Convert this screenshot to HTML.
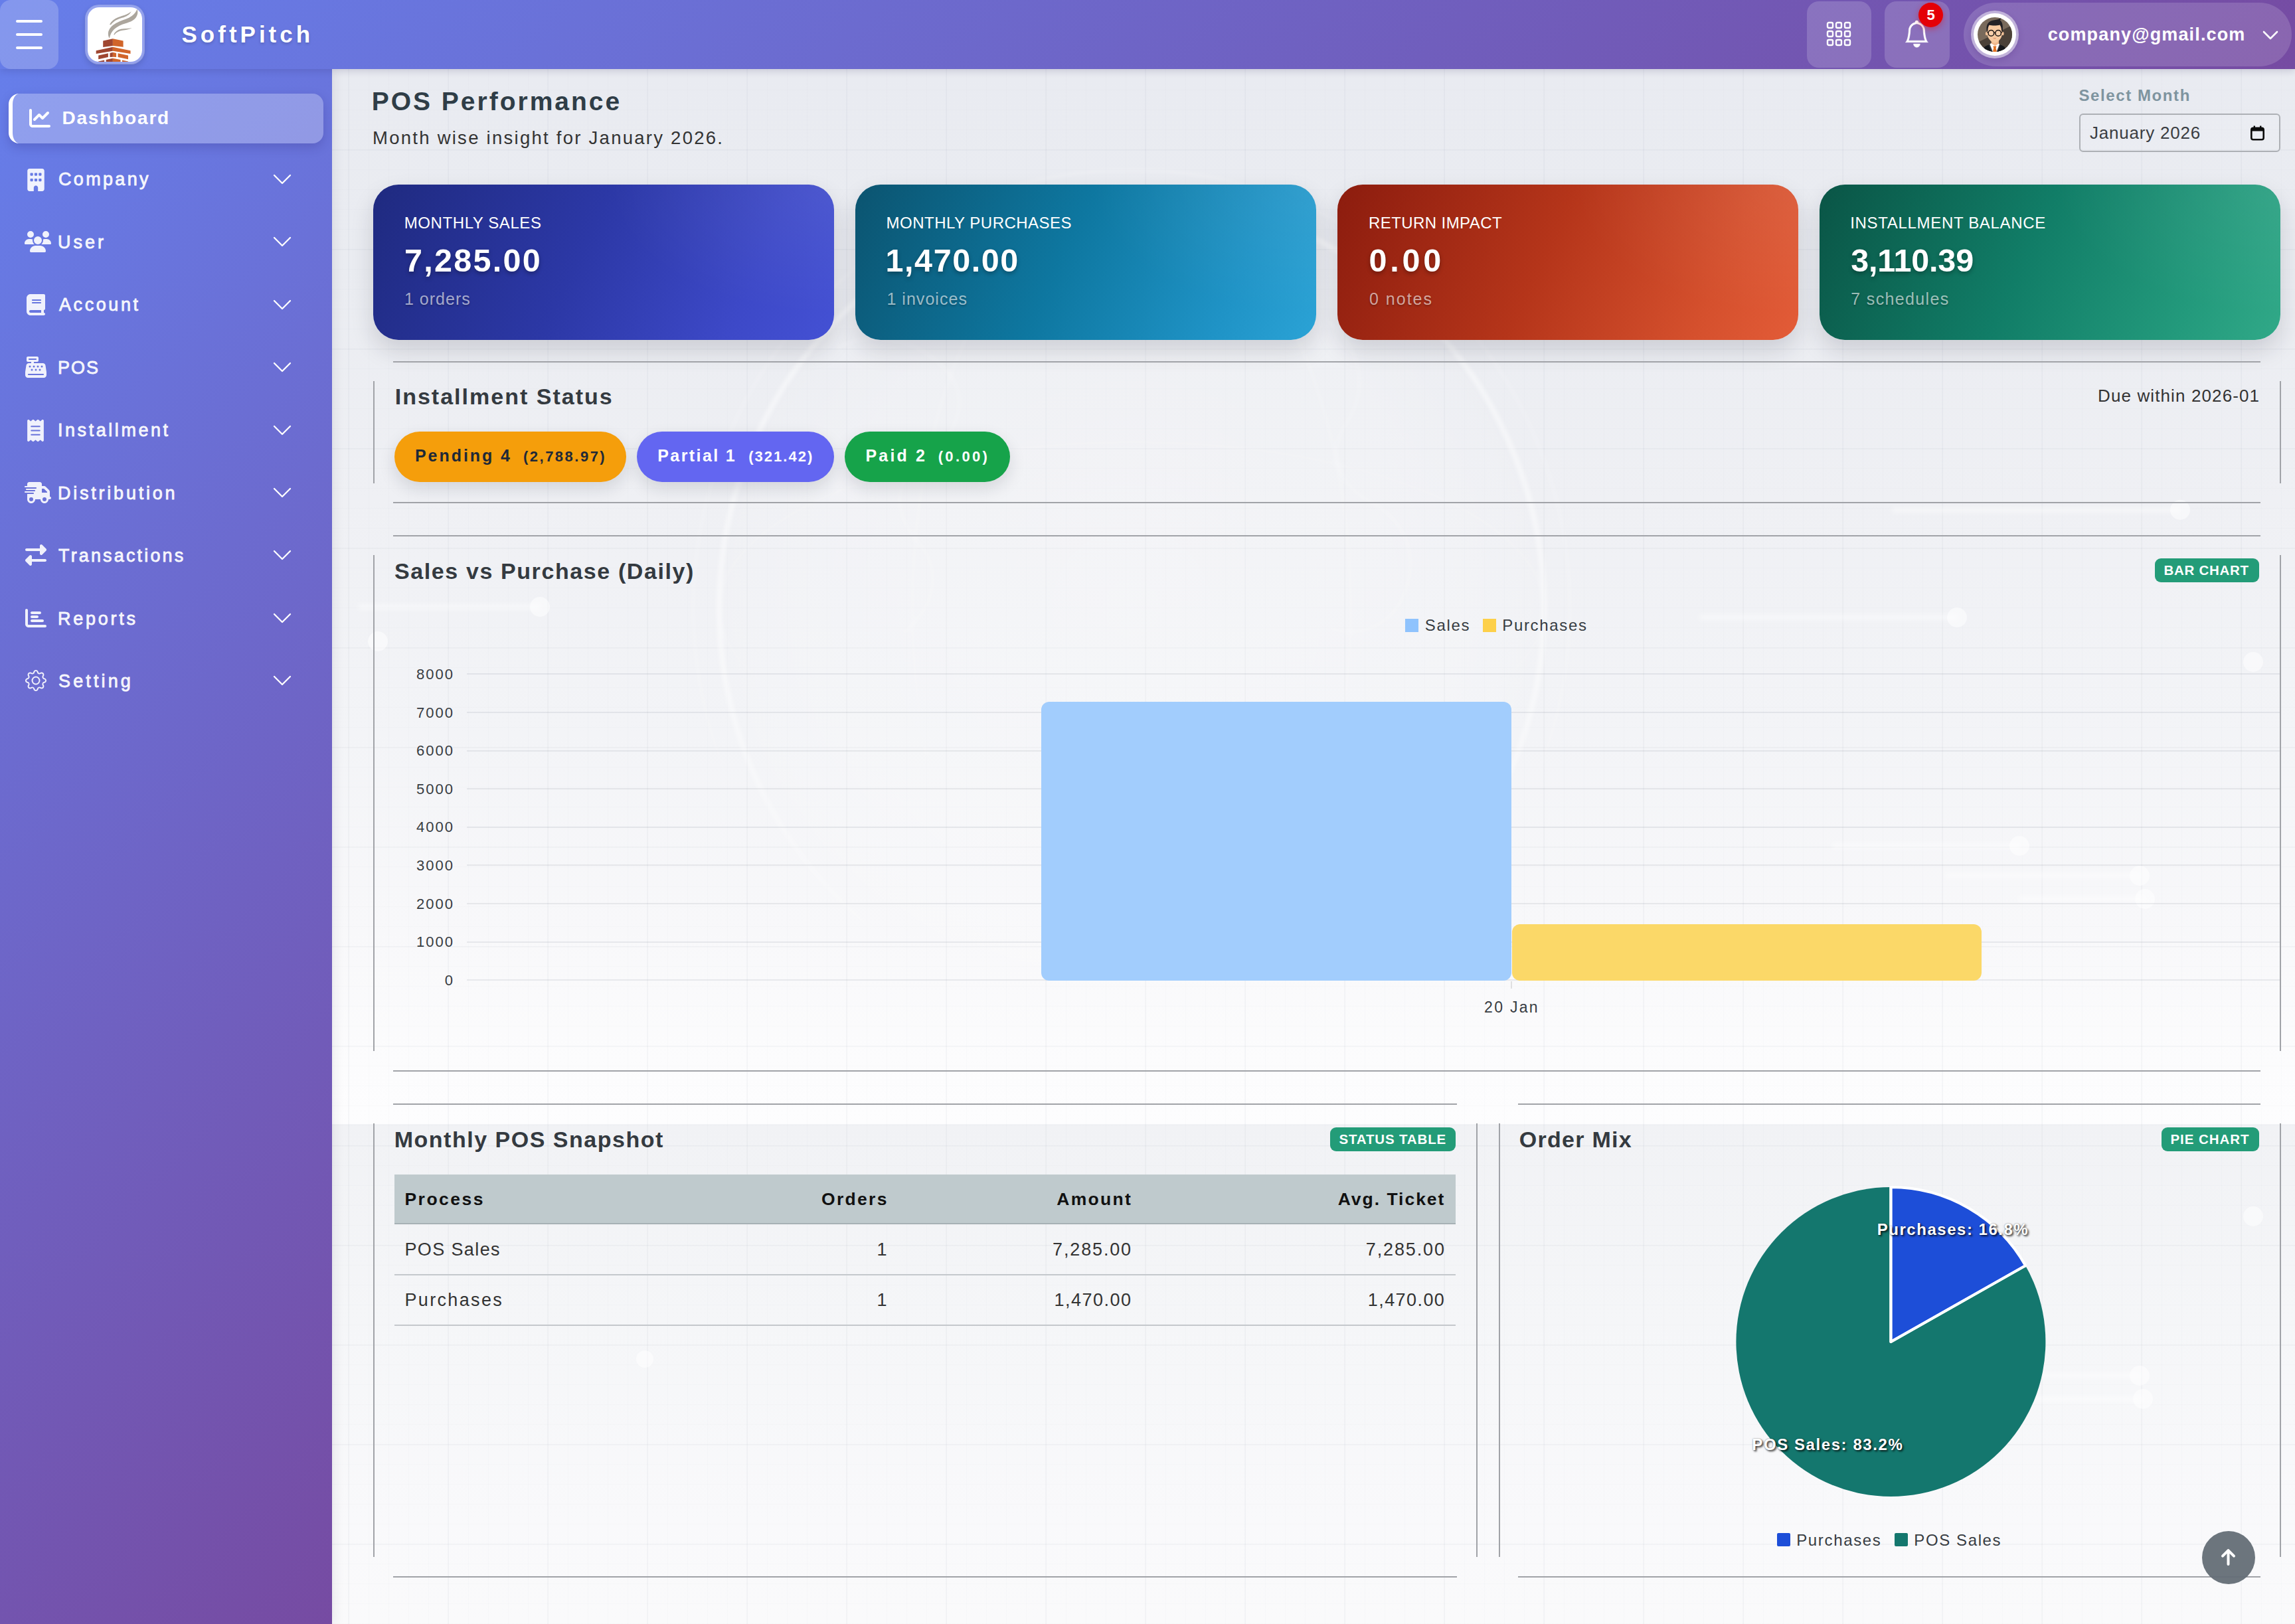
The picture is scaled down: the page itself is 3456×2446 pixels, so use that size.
<!DOCTYPE html>
<html lang="en">
<head>
<meta charset="utf-8">
<title>POS Performance</title>
<style>
*{box-sizing:border-box;margin:0;padding:0}
html,body{width:3456px;height:2446px;overflow:hidden}
body{font-family:"Liberation Sans",sans-serif;color:#333;position:relative;background:#f4f5f8}
.abs{position:absolute}
.t{position:absolute;white-space:nowrap;line-height:1}
/* ---------- main background ---------- */
#main{position:absolute;left:500px;top:104px;width:2956px;height:2342px;overflow:hidden;background:#f6f7f9}
#bg1{position:absolute;left:0;top:0;width:100%;height:1589px;background:linear-gradient(180deg,#e9ebf1 0px,#eaecf1 300px,#eff0f4 650px,#f3f4f7 1000px,#f8f8fa 1300px,#fcfcfd 1500px,#fdfdfe 1589px)}
#bg2{position:absolute;left:0;top:1589px;width:100%;height:753px;background:linear-gradient(180deg,#f1f2f5 0px,#f5f6f8 300px,#f9f9fb 600px,#fafafb 753px)}
#grid{position:absolute;left:0;top:0;width:100%;height:100%;
 background-image:
  linear-gradient(rgba(120,130,150,.045) 2px,transparent 2px),
  linear-gradient(90deg,rgba(120,130,150,.045) 2px,transparent 2px),
  linear-gradient(rgba(120,130,150,.022) 1px,transparent 1px),
  linear-gradient(90deg,rgba(120,130,150,.022) 1px,transparent 1px);
 background-size:150px 150px,150px 150px,30px 30px,30px 30px;
 background-position:24px 121px,24px 121px,25px 1px,25px 1px;
}
/* ---------- header ---------- */
#header{position:absolute;left:0;top:0;width:3456px;height:104px;
 background:linear-gradient(135deg,#667eea 0%,#764ba2 100%);
 box-shadow:0 3px 10px rgba(40,30,90,.16);z-index:5}
#burger{position:absolute;left:0;top:0;width:88px;height:104px;border-radius:16px;background:rgba(255,255,255,.2)}
#burger i{position:absolute;left:24px;width:40px;height:4px;border-radius:2px;background:#fff}
#logo{position:absolute;left:128px;top:7px;width:90px;height:90px;border-radius:21px;background:#fff;border:4px solid rgba(255,255,255,.3);background-clip:padding-box;overflow:hidden;box-shadow:0 4px 10px rgba(0,0,0,.12)}
.hbtn{position:absolute;top:2px;height:100px;border-radius:18px;background:rgba(255,255,255,.17)}
#userpill{position:absolute;left:2957px;top:4px;width:494px;height:96px;border-radius:48px;background:rgba(255,255,255,.15)}
/* ---------- sidebar ---------- */
#sidebar{position:absolute;left:0;top:104px;width:500px;height:2342px;
 background:linear-gradient(135deg,#667eea 0%,#764ba2 100%);z-index:3;box-shadow:3px 0 16px rgba(30,30,60,.09)}
#dash{position:absolute;left:13px;top:37px;width:474px;height:75px;border-radius:16px;background:rgba(255,255,255,.27);border-left:6px solid #fff;box-shadow:0 6px 16px rgba(40,30,110,.22)}
.nav{position:absolute;left:89px;font-size:28px;font-weight:normal;color:rgba(255,255,255,.92);letter-spacing:1.6px;white-space:nowrap;line-height:1;-webkit-text-stroke:.9px rgba(255,255,255,.9)}
.chev{position:absolute;left:411px;width:28px;height:16px}
.nico{position:absolute}
/* ---------- stat cards ---------- */
.stat{position:absolute;top:174px;width:694px;height:234px;border-radius:38px;box-shadow:0 16px 34px rgba(25,30,50,.15);overflow:hidden}
.stat:after{content:"";position:absolute;inset:0;background:radial-gradient(ellipse 70% 120% at 100% 0%,rgba(255,255,255,.07),rgba(255,255,255,0) 70%)}
.stat .l{position:absolute;left:48px;top:47px;font-size:24px;color:#fff;letter-spacing:1.2px;line-height:1;white-space:nowrap;z-index:1}
.stat .v{position:absolute;left:47px;top:88px;font-size:49px;font-weight:bold;color:#fff;letter-spacing:1px;line-height:1;white-space:nowrap;z-index:1;text-shadow:0 3px 6px rgba(0,0,0,.3)}
.stat .s{position:absolute;left:48px;top:160px;font-size:25px;color:rgba(255,255,255,.6);letter-spacing:1.5px;line-height:1;white-space:nowrap;z-index:1;text-shadow:0 2px 3px rgba(0,0,0,.25)}
/* ---------- panels ---------- */
.hl{position:absolute;height:2px;background:#a1a3a8}
.vl{position:absolute;width:2px;background:#a1a3a8}
.ptitle{position:absolute;font-size:34px;font-weight:bold;color:#343a40;letter-spacing:1.3px;line-height:1;white-space:nowrap}
.badge{position:absolute;height:36px;border-radius:9px;background:#239c78}
.pill{position:absolute;top:546px;height:76px;border-radius:38px;box-shadow:0 10px 24px rgba(25,30,50,.13)}
.ax{position:absolute;font-size:24px;color:#373c42;letter-spacing:1.2px;line-height:1;white-space:nowrap}
.gl{position:absolute;left:203px;width:2730px;height:2px;background:rgba(95,105,125,.115)}
/* table */
.th{position:absolute;font-size:28px;font-weight:bold;color:#111;letter-spacing:1.4px;line-height:1;white-space:nowrap}
.td{position:absolute;font-size:28px;color:#333;letter-spacing:1.4px;line-height:1;white-space:nowrap}
.r{text-align:right}
</style>
</head>
<body>

<div id="main">
 <div id="bg1"></div><div id="bg2"></div><div id="grid"></div>
 <svg class="abs" style="left:0;top:0" width="2956" height="2342" viewBox="0 0 2956 2342">
  <defs>
   <radialGradient id="gg" cx="50%" cy="50%" r="50%"><stop offset="0" stop-color="#fff" stop-opacity=".28"/><stop offset=".75" stop-color="#fff" stop-opacity=".16"/><stop offset="1" stop-color="#fff" stop-opacity="0"/></radialGradient>
   <filter id="gb" x="-10%" y="-10%" width="120%" height="120%"><feGaussianBlur stdDeviation="3"/></filter>
   <linearGradient id="gm" x1="0" y1="0" x2="0" y2="1"><stop offset="0" stop-color="#fff"/><stop offset=".55" stop-color="#fff"/><stop offset=".9" stop-color="#000"/></linearGradient>
   <mask id="gmask" maskUnits="userSpaceOnUse" x="400" y="100" width="1700" height="1500"><rect x="400" y="100" width="1700" height="1500" fill="url(#gm)"/></mask>
  </defs>
  <circle cx="1204" cy="812" r="640" fill="url(#gg)"/>
  <g fill="none" stroke="#fff" filter="url(#gb)" mask="url(#gmask)">
   <circle cx="1204" cy="812" r="621" stroke-width="7" stroke-opacity=".55"/>
   <circle cx="1204" cy="812" r="660" stroke-width="3" stroke-opacity=".3"/>
   <ellipse cx="1204" cy="812" rx="330" ry="621" stroke-width="3" stroke-opacity=".28"/>
   <ellipse cx="1204" cy="812" rx="621" ry="250" stroke-width="3" stroke-opacity=".22"/>
   <path d="M760 420c60-30 130-10 170 40 30 40 10 90-30 120-50 30-60 80-20 130 40 40 30 100-20 140M1500 380c50 40 60 100 30 150-30 40-20 90 30 120 60 30 80 90 50 150-20 40-70 60-110 40" stroke-width="3" stroke-opacity=".3"/>
  </g>
  <g stroke="#fff" stroke-width="8" stroke-opacity=".4" fill="#fff" fill-opacity=".5">
   <path d="M2350 664H2783M2060 826H2447M2260 1170H2541M2430 1215H2722M2540 1250H2730M40 810H313M2430 1968H2722M2560 2003H2727" fill="none" filter="url(#gb)"/>
   <g stroke="none"><circle cx="2783" cy="664" r="15"/><circle cx="2447" cy="826" r="15"/><circle cx="2893" cy="893" r="15"/><circle cx="2541" cy="1170" r="15"/><circle cx="2722" cy="1215" r="15"/><circle cx="2730" cy="1250" r="15"/><circle cx="313" cy="810" r="15"/><circle cx="69" cy="862" r="15"/><circle cx="471" cy="1943" r="13"/><circle cx="2722" cy="1968" r="15"/><circle cx="2727" cy="2003" r="15"/><circle cx="2893" cy="1728" r="15"/></g>
  </g>
 </svg>
 <div class="t" id="h1" style="left:59.7px;top:29px;font-size:39px;font-weight:bold;color:#2f3d47;letter-spacing:2.99px">POS Performance</div>
 <div class="t" id="h2" style="left:61px;top:89.8px;font-size:27.5px;color:#333;letter-spacing:2.26px">Month wise insight for January 2026.</div>
 <div class="t" id="selm" style="left:2630.5px;top:27.8px;font-size:24px;color:#7e949f;letter-spacing:1.59px;font-weight:bold">Select Month</div>
 <div class="abs" style="left:2631px;top:67px;width:303px;height:58px;border:2px solid #adb0b5;border-radius:6px;background:rgba(255,255,255,.08)"></div>
 <div class="t" id="jan" style="left:2647px;top:83px;font-size:26px;color:#3a3d42;letter-spacing:0.79px">January 2026</div>
 <svg class="abs" style="left:2889px;top:85px" width="21" height="23" viewBox="0 0 21 23"><rect x="1.300" y="3.800" width="18.400" height="17.400" rx="2.800" fill="none" stroke="#0b0b0b" stroke-width="2.600"/><rect x="1.300" y="3.800" width="18.400" height="4.600" rx="1.500" fill="#0b0b0b"/><rect x="4.600" y="0.500" width="2.400" height="4.500" fill="#0b0b0b"/><rect x="14" y="0.500" width="2.400" height="4.500" fill="#0b0b0b"/></svg>
 <div class="stat" style="left:62px;background:linear-gradient(115deg,#1f2a80 0%,#2c38a6 45%,#3d49c8 80%,#4451d4 100%)"><div class="l" id="sl0" style="font-size:24px;letter-spacing:0.58px;left:46.8px;top:46px">MONTHLY SALES</div><div class="v" id="sv0" style="font-size:48.5px;letter-spacing:2.29px;left:47px;top:89.7px">7,285.00</div><div class="s" id="ss0" style="font-size:25px;letter-spacing:1.0px;left:47px;top:160.3px">1 orders</div></div>
 <div class="stat" style="left:788px;background:linear-gradient(115deg,#0b5470 0%,#0e77a0 45%,#1f93c6 80%,#2ba3d6 100%)"><div class="l" id="sl1" style="font-size:24px;letter-spacing:0.49px;left:46.6px;top:46px">MONTHLY PURCHASES</div><div class="v" id="sv1" style="font-size:48.5px;letter-spacing:1.54px;left:45.6px;top:89.7px">1,470.00</div><div class="s" id="ss1" style="font-size:25px;letter-spacing:1.04px;left:47.4px;top:160.3px">1 invoices</div></div>
 <div class="stat" style="left:1514px;background:linear-gradient(115deg,#8c1c0e 0%,#b5351a 45%,#d5502d 80%,#e35c38 100%)"><div class="l" id="sl2" style="font-size:24px;letter-spacing:0.42px;left:47px;top:46px">RETURN IMPACT</div><div class="v" id="sv2" style="font-size:48.5px;letter-spacing:4.8px;left:47.5px;top:89.7px">0.00</div><div class="s" id="ss2" style="font-size:25px;letter-spacing:2.0px;left:48px;top:160.3px">0 notes</div></div>
 <div class="stat" style="left:2240px;background:linear-gradient(115deg,#0a5546 0%,#117d67 45%,#239a7c 80%,#31a988 100%)"><div class="l" id="sl3" style="font-size:24px;letter-spacing:0.68px;left:46.2px;top:46px">INSTALLMENT BALANCE</div><div class="v" id="sv3" style="font-size:48.5px;letter-spacing:-0.17px;left:47.2px;top:89.7px">3,110.39</div><div class="s" id="ss3" style="font-size:25px;letter-spacing:1.37px;left:47.2px;top:160.3px">7 schedules</div></div>
 <div class="hl" style="left:92px;top:440px;width:2812px"></div><div class="hl" style="left:92px;top:652px;width:2812px"></div>
 <div class="vl" style="left:62px;top:470px;height:154px"></div><div class="vl" style="left:2933px;top:470px;height:154px"></div>
 <div class="ptitle" id="p1t" style="left:94.7px;top:476px;font-size:34px;letter-spacing:2.01px">Installment Status</div>
 <div class="t" id="due" style="right:52.8px;top:478.5px;font-size:26px;color:#333;letter-spacing:1.12px">Due within 2026-01</div>
 <div class="pill" style="left:94px;width:349px;background:#f59e0b"></div><div class="t" id="pl0a" style="left:125px;top:570.4px;font-size:25px;font-weight:bold;color:#1f2937;letter-spacing:2.94px">Pending 4</div><div class="t" id="pl0b" style="left:288px;top:573.4px;font-size:22px;font-weight:bold;color:#1f2937;letter-spacing:2.49px">(2,788.97)</div>
 <div class="pill" style="left:459px;width:297px;background:#6366f1"></div><div class="t" id="pl1a" style="left:490.3px;top:570.4px;font-size:25px;font-weight:bold;color:#fff;letter-spacing:2.4px">Partial 1</div><div class="t" id="pl1b" style="left:627.2px;top:573.4px;font-size:22px;font-weight:bold;color:#fff;letter-spacing:2.03px">(321.42)</div>
 <div class="pill" style="left:772px;width:249px;background:#16a34a"></div><div class="t" id="pl2a" style="left:803.5px;top:570.4px;font-size:25px;font-weight:bold;color:#fff;letter-spacing:3.16px">Paid 2</div><div class="t" id="pl2b" style="left:912.7px;top:573.4px;font-size:22px;font-weight:bold;color:#fff;letter-spacing:3.34px">(0.00)</div>
 <div class="hl" style="left:92px;top:702px;width:2812px"></div><div class="hl" style="left:92px;top:1508px;width:2812px"></div>
 <div class="vl" style="left:62px;top:732px;height:747px"></div><div class="vl" style="left:2933px;top:732px;height:747px"></div>
 <div class="ptitle" id="p2t" style="left:94px;top:739px;font-size:34px;letter-spacing:1.6px">Sales vs Purchase (Daily)</div>
 <div class="badge" style="left:2745px;top:737px;width:157px"></div><div class="t" id="b1" style="left:2758.5px;top:745px;font-size:20.5px;font-weight:bold;color:#fff;letter-spacing:0.71px">BAR CHART</div>
 <div class="abs" style="left:1616px;top:828px;width:20px;height:20px;background:#8fc3fd"></div><div class="ax" id="lg1" style="left:1645.7px;top:826.2px;font-size:24px;letter-spacing:1.7px">Sales</div>
 <div class="abs" style="left:1733px;top:828px;width:20px;height:20px;background:#fdd04a"></div><div class="ax" id="lg2" style="left:1762.3px;top:826.2px;font-size:24px;letter-spacing:1.65px">Purchases</div>
 <div class="gl" style="top:910.4px"></div><div class="ax r" id="y0" style="right:2772.1px;top:901.0px;font-size:22px;letter-spacing:1.97px">8000</div>
 <div class="gl" style="top:968.0px"></div><div class="ax r" id="y1" style="right:2772.1px;top:958.6px;font-size:22px;letter-spacing:1.97px">7000</div>
 <div class="gl" style="top:1025.6px"></div><div class="ax r" id="y2" style="right:2772.1px;top:1016.2px;font-size:22px;letter-spacing:1.97px">6000</div>
 <div class="gl" style="top:1083.2px"></div><div class="ax r" id="y3" style="right:2772.1px;top:1073.8px;font-size:22px;letter-spacing:1.97px">5000</div>
 <div class="gl" style="top:1140.8px"></div><div class="ax r" id="y4" style="right:2772.1px;top:1131.4px;font-size:22px;letter-spacing:1.97px">4000</div>
 <div class="gl" style="top:1198.4px"></div><div class="ax r" id="y5" style="right:2772.1px;top:1189.0px;font-size:22px;letter-spacing:1.97px">3000</div>
 <div class="gl" style="top:1256.0px"></div><div class="ax r" id="y6" style="right:2772.1px;top:1246.6px;font-size:22px;letter-spacing:1.97px">2000</div>
 <div class="gl" style="top:1313.6px"></div><div class="ax r" id="y7" style="right:2772.1px;top:1304.2px;font-size:22px;letter-spacing:1.97px">1000</div>
 <div class="gl" style="top:1371.2px"></div><div class="ax r" id="y8" style="right:2772.1px;top:1361.8px;font-size:22px;letter-spacing:1.97px">0</div>
 <div class="abs" style="left:1775px;top:1374px;width:2px;height:11px;background:rgba(0,0,0,.1)"></div>
 <div class="abs" style="left:1068px;top:953px;width:708px;height:420px;background:#a2cdfd;border-radius:12px"></div>
 <div class="abs" style="left:1777px;top:1288px;width:707px;height:85px;background:#fbd868;border-radius:12px"></div>
 <div class="ax" id="jan20" style="left:1735.1px;top:1402.2px;font-size:23px;letter-spacing:2.3px">20 Jan</div>
 <div class="hl" style="left:92px;top:1558px;width:1602px"></div><div class="hl" style="left:92px;top:2270px;width:1602px"></div>
 <div class="vl" style="left:62px;top:1588px;height:653px"></div><div class="vl" style="left:1723px;top:1588px;height:653px"></div>
 <div class="ptitle" id="p3t" style="left:93.7px;top:1595px;font-size:34px;letter-spacing:1.51px">Monthly POS Snapshot</div>
 <div class="badge" style="left:1503px;top:1594px;width:189px"></div><div class="t" id="b2" style="left:1516.5px;top:1601.8px;font-size:20.5px;font-weight:bold;color:#fff;letter-spacing:0.84px">STATUS TABLE</div>
 <div class="abs" style="left:94px;top:1665px;width:1598px;height:75px;background:#bfcacd;border-bottom:2px solid #a7b1b5"></div>
 <div class="abs" style="left:94px;top:1815px;width:1598px;height:2px;background:#c4c8cc"></div><div class="abs" style="left:94px;top:1891px;width:1598px;height:2px;background:#c4c8cc"></div>
 <div class="th" id="c00" style="left:109.4px;top:1689px;font-size:26.5px;letter-spacing:2.5px">Process</div>
 <div class="th r" id="c01" style="right:2118.2px;top:1689px;font-size:26.5px;letter-spacing:2.32px">Orders</div>
 <div class="th r" id="c02" style="right:1750.9px;top:1688.7px;font-size:26.5px;letter-spacing:2.3px">Amount</div>
 <div class="th r" id="c03" style="right:1279.6px;top:1688.7px;font-size:26.5px;letter-spacing:1.98px">Avg. Ticket</div>
 <div class="td" id="c10" style="left:109.4px;top:1764.9px;font-size:27px;letter-spacing:1.39px">POS Sales</div>
 <div class="td r" id="c11" style="right:2120.4px;top:1764.9px;font-size:27px;letter-spacing:0px">1</div>
 <div class="td r" id="c12" style="right:1751.0px;top:1764.5px;font-size:27px;letter-spacing:1.86px">7,285.00</div>
 <div class="td r" id="c13" style="right:1279.2px;top:1764.5px;font-size:27px;letter-spacing:1.86px">7,285.00</div>
 <div class="td" id="c20" style="left:109.4px;top:1840.9px;font-size:27px;letter-spacing:2.36px">Purchases</div>
 <div class="td r" id="c21" style="right:2120.4px;top:1840.9px;font-size:27px;letter-spacing:0px">1</div>
 <div class="td r" id="c22" style="right:1751.4px;top:1840.6px;font-size:27px;letter-spacing:1.49px">1,470.00</div>
 <div class="td r" id="c23" style="right:1279.7px;top:1840.6px;font-size:27px;letter-spacing:1.43px">1,470.00</div>
 <div class="hl" style="left:1786px;top:1558px;width:1118px"></div><div class="hl" style="left:1786px;top:2270px;width:1118px"></div>
 <div class="vl" style="left:1757px;top:1588px;height:653px"></div><div class="vl" style="left:2933px;top:1588px;height:653px"></div>
 <div class="ptitle" id="p4t" style="left:1787.7px;top:1594.8px;font-size:34px;letter-spacing:1.29px">Order Mix</div>
 <div class="badge" style="left:2755px;top:1594px;width:147px"></div><div class="t" id="b3" style="left:2768.4px;top:1602px;font-size:20.5px;font-weight:bold;color:#fff;letter-spacing:0.95px">PIE CHART</div>
 <svg class="abs" style="left:0;top:0" width="2956" height="2342" viewBox="0 0 2956 2342"><circle cx="2347.4" cy="1917" r="233" fill="#14776e"/><path d="M2347.4 1917L2347.4 1684A233 233 0 0 1 2550.2 1802.2Z" fill="#1d4ed8" stroke="#fff" stroke-width="4" stroke-linejoin="round"/><path d="M2347.4 1684L2347.4 1917L2550.2 1802.2" fill="none" stroke="#fff" stroke-width="4" stroke-linejoin="round"/></svg>
 <div class="t" id="pl_a" style="left:2326.8px;top:1736px;font-size:24px;font-weight:bold;color:#fff;letter-spacing:1.52px;text-shadow:2px 2px 3px rgba(0,0,0,.75),0 0 2px rgba(0,0,0,.5)">Purchases: 16.8%</div>
 <div class="t" id="pl_b" style="left:2138.3px;top:2059.6px;font-size:24px;font-weight:bold;color:#fff;letter-spacing:1.58px;text-shadow:2px 2px 3px rgba(0,0,0,.75),0 0 2px rgba(0,0,0,.5)">POS Sales: 83.2%</div>
 <div class="abs" style="left:2176px;top:2205px;width:20px;height:20px;background:#1d4ed8;border-radius:2px"></div><div class="ax" id="lg3" style="left:2205.2px;top:2204px;font-size:24px;letter-spacing:1.65px">Purchases</div>
 <div class="abs" style="left:2353px;top:2205px;width:20px;height:20px;background:#14776e;border-radius:2px"></div><div class="ax" id="lg4" style="left:2382.3px;top:2204px;font-size:24px;letter-spacing:1.61px">POS Sales</div>
</div>

<div class="abs" style="left:3316px;top:2306px;width:80px;height:80px;border-radius:50%;background:rgba(100,110,118,.95);z-index:4"><svg class="abs" style="left:0;top:0" width="80" height="80" viewBox="0 0 80 80" fill="none" stroke="#fff" stroke-width="4" stroke-linecap="round" stroke-linejoin="round"><path d="M39.500 50V29.200M31 37.700l8.500-8.500 8.500 8.500"/></svg></div>

<div id="sidebar">
 <div id="dash"></div>
 <svg class="nico" style="left:44px;top:60px" width="32" height="28" viewBox="0 0 512 448" fill="#fff"><path d="M64 32C64 14.300 49.700 0 32 0S0 14.300 0 32V368c0 44.200 35.800 80 80 80H480c17.700 0 32-14.300 32-32s-14.300-32-32-32H80c-8.800 0-16-7.200-16-16V32zm406.600 86.600c12.500-12.500 12.500-32.800 0-45.300s-32.800-12.500-45.300 0L320 178.700l-57.400-57.400c-12.500-12.500-32.800-12.500-45.300 0l-112 112c-12.500 12.500-12.500 32.800 0 45.300s32.800 12.500 45.300 0L240 189.300l57.400 57.400c12.500 12.500 32.800 12.500 45.300 0l128-128z"/></svg>
 <div class="nav" id="n_dash" style="left:93.4px;top:60.2px;font-weight:bold;color:#fff;-webkit-text-stroke:0;letter-spacing:1.82px;font-size:28px">Dashboard</div>
 <svg class="nico" style="left:41px;top:150px" width="26" height="34" viewBox="0 0 384 512" fill="rgba(255,255,255,.9)"><path d="M48 0C21.500 0 0 21.500 0 48V464c0 26.500 21.500 48 48 48h96V432c0-26.500 21.500-48 48-48s48 21.500 48 48v80h96c26.500 0 48-21.500 48-48V48c0-26.500-21.500-48-48-48H48zM64 240c0-8.800 7.200-16 16-16h32c8.800 0 16 7.200 16 16v32c0 8.800-7.200 16-16 16H80c-8.800 0-16-7.200-16-16V240zm112-16h32c8.800 0 16 7.200 16 16v32c0 8.800-7.200 16-16 16H176c-8.800 0-16-7.200-16-16V240c0-8.800 7.200-16 16-16zm80 16c0-8.800 7.200-16 16-16h32c8.800 0 16 7.200 16 16v32c0 8.800-7.200 16-16 16H272c-8.800 0-16-7.200-16-16V240zM80 96h32c8.800 0 16 7.200 16 16v32c0 8.800-7.200 16-16 16H80c-8.800 0-16-7.200-16-16V112c0-8.800 7.200-16 16-16zm80 16c0-8.800 7.200-16 16-16h32c8.800 0 16 7.200 16 16v32c0 8.800-7.200 16-16 16H176c-8.800 0-16-7.200-16-16V112zM272 96h32c8.800 0 16 7.200 16 16v32c0 8.800-7.200 16-16 16H272c-8.800 0-16-7.200-16-16V112c0-8.800 7.200-16 16-16z"/></svg>
 <div class="nav" id="n_Company" style="top:153px;font-size:27px;letter-spacing:3.33px;left:88px">Company</div>
 <svg class="chev" style="top:158px" viewBox="0 0 28 16" fill="none" stroke="#fff" stroke-width="2.300" stroke-linecap="round" stroke-linejoin="round"><path d="M2 2l12 12L26 2"/></svg>
 <svg class="nico" style="left:37px;top:244px" width="40" height="32" viewBox="0 0 640 512" fill="rgba(255,255,255,.9)"><path d="M144 0a80 80 0 1 1 0 160A80 80 0 1 1 144 0zM512 0a80 80 0 1 1 0 160A80 80 0 1 1 512 0zM0 298.700C0 239.800 47.800 192 106.700 192h42.700c15.900 0 31 3.500 44.600 9.700c-1.300 7.200-1.900 14.700-1.900 22.300c0 38.200 16.800 72.500 43.300 96c-.2 0-.4 0-.7 0H21.300C9.600 320 0 310.400 0 298.700zM405.300 320c-.2 0-.4 0-.7 0c26.600-23.500 43.300-57.800 43.300-96c0-7.600-.7-15-1.900-22.300c13.600-6.300 28.700-9.700 44.600-9.700h42.700C592.200 192 640 239.800 640 298.700c0 11.800-9.600 21.300-21.300 21.300H405.300zM224 224a96 96 0 1 1 192 0 96 96 0 1 1 -192 0zM128 485.300C128 411.700 187.700 352 261.300 352H378.700C452.300 352 512 411.700 512 485.300c0 14.700-11.900 26.700-26.700 26.700H154.700c-14.700 0-26.700-11.900-26.700-26.700z"/></svg>
 <div class="nav" id="n_User" style="top:247.5px;font-size:27px;letter-spacing:4.0px;left:87px">User</div>
 <svg class="chev" style="top:252px" viewBox="0 0 28 16" fill="none" stroke="#fff" stroke-width="2.300" stroke-linecap="round" stroke-linejoin="round"><path d="M2 2l12 12L26 2"/></svg>
 <svg class="nico" style="left:40px;top:339px" width="28" height="32" viewBox="0 0 448 512" fill="rgba(255,255,255,.9)"><path d="M96 0C43 0 0 43 0 96V416c0 53 43 96 96 96H384h32c17.700 0 32-14.300 32-32s-14.300-32-32-32V384c17.700 0 32-14.300 32-32V32c0-17.700-14.300-32-32-32H384 96zm0 384H352v64H96c-17.700 0-32-14.300-32-32s14.300-32 32-32zm32-240c0-8.800 7.200-16 16-16H336c8.800 0 16 7.200 16 16s-7.200 16-16 16H144c-8.800 0-16-7.200-16-16zm16 48H336c8.800 0 16 7.200 16 16s-7.200 16-16 16H144c-8.800 0-16-7.200-16-16s7.200-16 16-16z"/></svg>
 <div class="nav" id="n_Account" style="top:342px;font-size:27px;letter-spacing:3.57px;left:89px">Account</div>
 <svg class="chev" style="top:347px" viewBox="0 0 28 16" fill="none" stroke="#fff" stroke-width="2.300" stroke-linecap="round" stroke-linejoin="round"><path d="M2 2l12 12L26 2"/></svg>
 <svg class="nico" style="left:38px;top:433px" width="32" height="32" viewBox="0 0 512 512" fill="rgba(255,255,255,.9)"><path d="M64 0C46.300 0 32 14.300 32 32V96c0 17.700 14.300 32 32 32h80v32H87c-31.600 0-58.500 23.100-63.300 54.400L1.100 364.100C.4 368.800 0 373.600 0 378.400V448c0 35.300 28.700 64 64 64H448c35.300 0 64-28.700 64-64V378.400c0-4.800-.4-9.600-1.100-14.400L488.200 214.400C483.500 183.100 456.600 160 425 160H208V128h80c17.700 0 32-14.300 32-32V32c0-17.700-14.300-32-32-32H64zM96 48H256c8.800 0 16 7.200 16 16s-7.200 16-16 16H96c-8.800 0-16-7.200-16-16s7.200-16 16-16zM64 432c0-8.800 7.200-16 16-16H432c8.800 0 16 7.200 16 16s-7.200 16-16 16H80c-8.800 0-16-7.200-16-16zm48-168a24 24 0 1 1 0-48 24 24 0 1 1 0 48zm120-24a24 24 0 1 1 -48 0 24 24 0 1 1 48 0zM160 344a24 24 0 1 1 0-48 24 24 0 1 1 0 48zM328 240a24 24 0 1 1 -48 0 24 24 0 1 1 48 0zM256 344a24 24 0 1 1 0-48 24 24 0 1 1 0 48zM424 240a24 24 0 1 1 -48 0 24 24 0 1 1 48 0zM352 344a24 24 0 1 1 0-48 24 24 0 1 1 0 48z"/></svg>
 <div class="nav" id="n_POS" style="top:436.5px;font-size:27px;letter-spacing:1.95px;left:87px">POS</div>
 <svg class="chev" style="top:441px" viewBox="0 0 28 16" fill="none" stroke="#fff" stroke-width="2.300" stroke-linecap="round" stroke-linejoin="round"><path d="M2 2l12 12L26 2"/></svg>
 <svg class="nico" style="left:41px;top:528px" width="25" height="33" viewBox="0 0 384 512" fill="rgba(255,255,255,.9)"><path d="M14 2.200C22.500-1.700 32.500-.300 39.600 5.800L80 40.400 120.400 5.800c9-7.700 22.300-7.700 31.200 0L192 40.400 232.400 5.800c9-7.700 22.300-7.700 31.200 0L304 40.400 344.400 5.800c7.100-6.100 17.100-7.500 25.600-3.600s14 12.400 14 21.800V488c0 9.400-5.500 17.900-14 21.800s-18.500 2.500-25.600-3.600L304 471.600l-40.400 34.600c-9 7.700-22.300 7.700-31.200 0L192 471.600l-40.400 34.600c-9 7.700-22.300 7.700-31.200 0L80 471.600 39.600 506.200c-7.100 6.100-17.100 7.500-25.600 3.600S0 497.400 0 488V24C0 14.600 5.500 6.100 14 2.200zM96 144c-8.800 0-16 7.200-16 16s7.200 16 16 16H288c8.800 0 16-7.200 16-16s-7.200-16-16-16H96zM80 352c0 8.800 7.200 16 16 16H288c8.800 0 16-7.200 16-16s-7.200-16-16-16H96c-8.800 0-16 7.200-16 16zM96 240c-8.800 0-16 7.200-16 16s7.200 16 16 16H288c8.800 0 16-7.200 16-16s-7.200-16-16-16H96z"/></svg>
 <div class="nav" id="n_Installment" style="top:531px;font-size:27px;letter-spacing:3.55px;left:87px">Installment</div>
 <svg class="chev" style="top:536px" viewBox="0 0 28 16" fill="none" stroke="#fff" stroke-width="2.300" stroke-linecap="round" stroke-linejoin="round"><path d="M2 2l12 12L26 2"/></svg>
 <svg class="nico" style="left:37px;top:622px" width="40" height="32" viewBox="0 0 640 512" fill="rgba(255,255,255,.9)"><path d="M112 0C85.500 0 64 21.500 64 48V96H16c-8.800 0-16 7.200-16 16s7.200 16 16 16H64 272c8.800 0 16 7.200 16 16s-7.200 16-16 16H64 48c-8.800 0-16 7.200-16 16s7.200 16 16 16H64 240c8.800 0 16 7.200 16 16s-7.200 16-16 16H64 16c-8.800 0-16 7.200-16 16s7.200 16 16 16H64 208c8.800 0 16 7.200 16 16s-7.200 16-16 16H64V416c0 53 43 96 96 96s96-43 96-96H384c0 53 43 96 96 96s96-43 96-96h32c17.700 0 32-14.300 32-32s-14.300-32-32-32V288 256 237.300c0-17-6.700-33.300-18.700-45.300L512 114.700c-12-12-28.300-18.700-45.300-18.700H416V48c0-26.500-21.500-48-48-48H112zM544 237.300V256H416V160h50.700L544 237.300zM160 368a48 48 0 1 1 0 96 48 48 0 1 1 0-96zm272 48a48 48 0 1 1 96 0 48 48 0 1 1 -96 0z"/></svg>
 <div class="nav" id="n_Distribution" style="top:625.5px;font-size:27px;letter-spacing:3.77px;left:87px">Distribution</div>
 <svg class="chev" style="top:630px" viewBox="0 0 28 16" fill="none" stroke="#fff" stroke-width="2.300" stroke-linecap="round" stroke-linejoin="round"><path d="M2 2l12 12L26 2"/></svg>
 <svg class="nico" style="left:38px;top:716px" width="32" height="32" viewBox="0 0 512 512" fill="rgba(255,255,255,.9)"><path d="M32 96l320 0V32c0-12.900 7.800-24.600 19.800-29.600s25.700-2.200 34.900 6.900l96 96c6 6 9.400 14.100 9.400 22.600s-3.400 16.600-9.400 22.600l-96 96c-9.200 9.200-22.900 11.900-34.900 6.900s-19.800-16.600-19.800-29.600V160L32 160c-17.700 0-32-14.300-32-32s14.300-32 32-32zM480 352c17.700 0 32 14.300 32 32s-14.300 32-32 32H160v64c0 12.900-7.800 24.600-19.800 29.600s-25.700 2.200-34.900-6.900l-96-96c-6-6-9.400-14.100-9.400-22.600s3.400-16.600 9.400-22.600l96-96c9.200-9.200 22.900-11.900 34.900-6.900s19.800 16.600 19.800 29.600l0 64H480z"/></svg>
 <div class="nav" id="n_Transactions" style="top:720px;font-size:27px;letter-spacing:3.15px;left:88px">Transactions</div>
 <svg class="chev" style="top:724px" viewBox="0 0 28 16" fill="none" stroke="#fff" stroke-width="2.300" stroke-linecap="round" stroke-linejoin="round"><path d="M2 2l12 12L26 2"/></svg>
 <svg class="nico" style="left:38px;top:811px" width="32" height="32" viewBox="0 0 512 512" fill="rgba(255,255,255,.9)"><path d="M32 32c17.700 0 32 14.300 32 32V400c0 8.800 7.200 16 16 16H480c17.700 0 32 14.300 32 32s-14.300 32-32 32H80c-44.200 0-80-35.800-80-80V64C0 46.300 14.300 32 32 32zm96 96c0-17.700 14.300-32 32-32l192 0c17.700 0 32 14.300 32 32s-14.300 32-32 32l-192 0c-17.700 0-32-14.300-32-32zm32 64H288c17.700 0 32 14.300 32 32s-14.300 32-32 32H160c-17.700 0-32-14.300-32-32s14.300-32 32-32zm0 96H416c17.700 0 32 14.300 32 32s-14.300 32-32 32H160c-17.700 0-32-14.300-32-32s14.300-32 32-32z"/></svg>
 <div class="nav" id="n_Reports" style="top:814.5px;font-size:27px;letter-spacing:3.73px;left:87px">Reports</div>
 <svg class="chev" style="top:819px" viewBox="0 0 28 16" fill="none" stroke="#fff" stroke-width="2.300" stroke-linecap="round" stroke-linejoin="round"><path d="M2 2l12 12L26 2"/></svg>
 <svg class="nico" style="left:38px;top:905px" width="32" height="32" viewBox="0 0 16 16" fill="rgba(255,255,255,.9)"><path d="M8 4.754a3.246 3.246 0 1 0 0 6.492 3.246 3.246 0 0 0 0-6.492zM5.754 8a2.246 2.246 0 1 1 4.492 0 2.246 2.246 0 0 1-4.492 0z"/><path d="M9.796 1.343c-.527-1.790-3.065-1.790-3.592 0l-.094.319a.873.873 0 0 1-1.255.520l-.292-.160c-1.640-.892-3.433.902-2.540 2.541l.159.292a.873.873 0 0 1-.520 1.255l-.319.094c-1.790.527-1.790 3.065 0 3.592l.319.094a.873.873 0 0 1 .520 1.255l-.160.292c-.892 1.640.901 3.434 2.541 2.540l.292-.159a.873.873 0 0 1 1.255.520l.094.319c.527 1.790 3.065 1.790 3.592 0l.094-.319a.873.873 0 0 1 1.255-.520l.292.160c1.640.893 3.434-.902 2.540-2.541l-.159-.292a.873.873 0 0 1 .520-1.255l.319-.094c1.790-.527 1.790-3.065 0-3.592l-.319-.094a.873.873 0 0 1-.520-1.255l.160-.292c.893-1.640-.902-3.433-2.541-2.540l-.292.159a.873.873 0 0 1-1.255-.520l-.094-.319zm-2.633.283c.246-.835 1.428-.835 1.674 0l.094.319a1.873 1.873 0 0 0 2.693 1.115l.291-.160c.764-.415 1.600.420 1.184 1.185l-.159.292a1.873 1.873 0 0 0 1.116 2.692l.318.094c.835.246.835 1.428 0 1.674l-.319.094a1.873 1.873 0 0 0-1.115 2.693l.160.291c.415.764-.420 1.600-1.185 1.184l-.291-.159a1.873 1.873 0 0 0-2.693 1.116l-.094.318c-.246.835-1.428.835-1.674 0l-.094-.319a1.873 1.873 0 0 0-2.692-1.115l-.292.160c-.764.415-1.600-.420-1.184-1.185l.159-.291A1.873 1.873 0 0 0 1.945 8.930l-.319-.094c-.835-.246-.835-1.428 0-1.674l.319-.094A1.873 1.873 0 0 0 3.060 4.377l-.160-.292c-.415-.764.420-1.600 1.185-1.184l.292.159a1.873 1.873 0 0 0 2.692-1.115l.094-.319z"/></svg>
 <div class="nav" id="n_Setting" style="top:909px;font-size:27px;letter-spacing:4.13px;left:88px">Setting</div>
 <svg class="chev" style="top:913px" viewBox="0 0 28 16" fill="none" stroke="#fff" stroke-width="2.300" stroke-linecap="round" stroke-linejoin="round"><path d="M2 2l12 12L26 2"/></svg>
</div>

<div id="header">
 <div id="burger"><i style="top:30px"></i><i style="top:50px"></i><i style="top:70px"></i></div>
 <div id="logo">
  <svg width="82" height="82" viewBox="0 0 82 82">
   <path d="M32.200 46C30.500 42 30.200 37.500 32.500 33.500C35.500 28 41 24.500 47.500 21.500C54 18.800 61 17 66.500 13C70.500 10 73 6.800 74.600 2.800C76 7 75.500 11 73 15C69.500 20 64 22.200 57 24.200C50.500 26 44.500 28.800 40 33C36 37 33.800 41.500 33 46Z" fill="#aca69d"/>
   <path d="M33 26C35.500 21 40 17.500 46 15C52.500 12.500 59 11.500 65.800 6.200C63 11.500 58 14 52 15.800C46 17.600 40 20 35 26.200Z" fill="#aca69d"/>
   <path d="M39.200 41.300C41 37 44.500 34.200 50 32.800C55.500 31.600 61 32.600 66.800 31.100C62.500 33.800 57.500 34 52.500 34.800C47.500 35.600 43 37.500 40.300 41.500Z" fill="#aca69d"/>
   <path d="M23.200 50.400L37.900 47.200V58.100L23.200 60Z" fill="#9f4630"/><path d="M37.900 47.200L53.600 50.400V59.700L37.900 58.100Z" fill="#d1652a"/>
   <path d="M12.700 65.200L37.900 59.700V65.800L12.700 70Z" fill="#9f4630"/><path d="M37.900 59.700L64.500 65.200V70L37.900 65.800Z" fill="#d1652a"/>
   <path d="M16.200 72.500L30.900 69.300V75.100L16.200 78.300Z" fill="#9f4630"/>
   <path d="M33.500 69L37.900 67.700V74.800L33.500 75.100Z" fill="#9f4630"/><path d="M37.900 67.700L43.100 69V75.100L37.900 74.800Z" fill="#d1652a"/>
   <path d="M45.600 69.300L61 72.500V78.300L45.600 75.100Z" fill="#d1652a"/>
   <path d="M16.200 81.500L25.100 79.600V82H16.200Z" fill="#9f4630"/>
   <path d="M27.700 79L37.900 76.700V82H27.700Z" fill="#9f4630"/><path d="M37.900 76.700L49.500 79V82H37.900Z" fill="#d1652a"/>
   <path d="M52 79.600L61 81.500V82H52Z" fill="#d1652a"/>
  </svg>
 </div>
 <div class="t" id="brand" style="left:273.5px;top:34px;font-size:35px;font-weight:bold;color:#fff;letter-spacing:5.0px;text-shadow:0 2px 4px rgba(0,0,0,.18)">SoftPitch</div>

 <div class="hbtn" style="left:2721px;width:97px">
  <svg class="abs" style="left:29px;top:30px" width="38" height="38" viewBox="0 0 38 38" fill="none" stroke="#fff" stroke-width="2.400">
   <rect x="2" y="2" width="8" height="8" rx="2"/><rect x="15" y="2" width="8" height="8" rx="2"/><rect x="28" y="2" width="8" height="8" rx="2"/>
   <rect x="2" y="15" width="8" height="8" rx="2"/><rect x="15" y="15" width="8" height="8" rx="2"/><rect x="28" y="15" width="8" height="8" rx="2"/>
   <rect x="2" y="28" width="8" height="8" rx="2"/><rect x="15" y="28" width="8" height="8" rx="2"/><rect x="28" y="28" width="8" height="8" rx="2"/>
  </svg>
 </div>
 <div class="hbtn" style="left:2838px;width:98px">
  <svg class="abs" style="left:28.900px;top:23.700px" width="38.900" height="46.500" viewBox="0 0 16 18.500" preserveAspectRatio="none" fill="#fff" stroke="#fff" stroke-width=".25">
   <path d="M8 18a2 2 0 0 0 2-2H6a2 2 0 0 0 2 2zM8 3.918l-.797.161A4.002 4.002 0 0 0 4 8c0 .628-.134 2.197-.459 3.742-.16.767-.376 1.566-.663 2.258h10.244c-.287-.692-.502-1.49-.663-2.258C12.134 10.197 12 8.628 12 8a4.002 4.002 0 0 0-3.203-3.92L8 3.917zM14.22 14c.223.447.481.801.78 1H1c.299-.199.557-.553.78-1C2.68 12.200 3 8.880 3 8c0-2.420 1.720-4.440 4.005-4.901a1 1 0 1 1 1.990 0A5.002 5.002 0 0 1 13 8c0 .880.320 4.200 1.220 6z"/>
  </svg>
  <div class="abs" style="left:51px;top:2px;width:37px;height:37px;border-radius:50%;background:#e40006;box-shadow:0 3px 10px rgba(228,0,6,.4);color:#fff;font-weight:bold;font-size:22px;line-height:37px;text-align:center">5</div>
 </div>
 <div id="userpill">
  <div class="abs" style="left:11px;top:12px;width:72px;height:72px;border-radius:50%;background:rgba(255,255,255,.48);box-shadow:0 4px 10px rgba(60,30,110,.18)"></div>
  <div class="abs" style="left:15px;top:16px;width:64px;height:64px;border-radius:50%;background:#fff"></div>
  <svg class="abs" style="left:21px;top:22px" width="52" height="52" viewBox="0 0 52 52">
   <defs><clipPath id="avc"><circle cx="26" cy="26" r="26"/></clipPath></defs>
   <g clip-path="url(#avc)">
    <rect width="52" height="52" fill="#796a5b"/>
    <path d="M0 38L52 12V52H0z" fill="#4b4138"/>
    <path d="M7 52c1-6 4-9 10-10.500l8.500-2.500 8.500 2.500c6 1.500 9 4.500 10 10.500z" fill="#3b3e44"/>
    <path d="M7 52c1-6 4-9 10-10.500l4 10.500zM44 52c-1-6-4-9-10-10.500l-4 10.500z" fill="#17181b"/>
    <path d="M18.400 40.500l3-2h8.600l3 2-4.500 11.500h-5.600z" fill="#fff"/>
    <path d="M23.400 43.500h5l-.8 3 1.400 5.500h-6.200l1.400-5.500z" fill="#e2701f"/>
    <path d="M20.700 33h11.300v6.500l-5.600 3.500-5.700-3.500z" fill="#f0b98d"/>
    <ellipse cx="13.600" cy="24.500" rx="1.800" ry="2.800" fill="#f2c197"/><ellipse cx="37.900" cy="24.500" rx="1.800" ry="2.800" fill="#f2c197"/>
    <path d="M14.800 14c0-3 4-5 11-5s11 2 11 5v11c0 5-3 9-6 11.500-2 1.700-3.500 2-5 2s-3-.3-5-2c-3-2.500-6-6.500-6-11.500z" fill="#f6c9a0"/>
    <path d="M13.800 21c-1.200-8 1.200-13.500 6.500-15.500 3-1.200 7-1.500 10-2.300 2-.6 3.500-1.500 5.500-3.200-.3 2-1 3.300-2 4.500 3 2 4.800 6.500 4 16.500l-1.800-.5c0-4-1-7-2.500-9-5 1.500-12 1.200-16 .2-1.300 2-2 5-2 8.800z" fill="#232125"/>
    <circle cx="20.400" cy="23.900" r="4.300" fill="rgba(255,255,255,.12)" stroke="#1d1614" stroke-width="1.500"/>
    <circle cx="31.100" cy="23.900" r="4.300" fill="rgba(255,255,255,.12)" stroke="#1d1614" stroke-width="1.500"/>
    <path d="M24.600 23.200h2.400M16.100 22.800l-2-.8M35.400 22.800l2-.8" stroke="#1d1614" stroke-width="1.300" fill="none"/>
    <path d="M24 31.500q1.800 1 3.600 0" stroke="#e0906a" stroke-width="1.200" fill="none"/>
   </g>
  </svg>
  <div class="t" id="email" style="left:126.7px;top:34.5px;font-size:27px;font-weight:bold;color:#fff;letter-spacing:1.14px">company@gmail.com</div>
  <svg class="abs" style="left:450px;top:42px" width="24" height="14" viewBox="0 0 24 14" fill="none" stroke="#fff" stroke-width="2.6" stroke-linecap="round" stroke-linejoin="round"><path d="M2 2l10 10L22 2"/></svg>
 </div>
</div>

</body>
</html>
